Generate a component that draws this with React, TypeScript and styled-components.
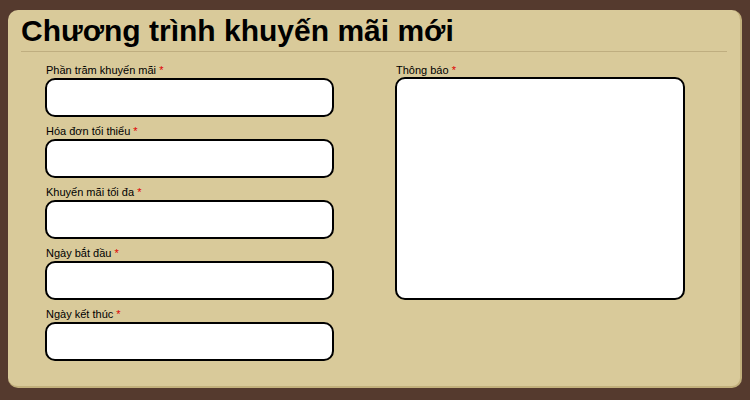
import React from "react";
import styled, { createGlobalStyle } from "styled-components";

const Global = createGlobalStyle`
  html, body { margin: 0; padding: 0; background: #553a2e; }
  body { padding: 10px 8px 12px 8px; font-family: "Liberation Sans", Arial, sans-serif; }
`;

const Panel = styled.div`
  box-sizing: border-box;
  width: 734px;
  height: 378px;
  background: #d9ca9a;
  border-radius: 10px;
  border-right: 2px solid #c2b07c;
  border-bottom: 2px solid #c2b07c;
  padding: 4px 13px 0 13px;
`;

const Title = styled.h1`
  margin: 0;
  font-size: 30px;
  font-weight: bold;
  color: #000;
  line-height: 34px;
  padding-bottom: 3px;
  border-bottom: 1px solid #bfae80;
`;

const Body = styled.div`
  display: flex;
  padding: 12px 0 0 24px;
`;

const Column = styled.div<{ $w: number }>`
  display: flex;
  flex-direction: column;
  width: ${(p) => p.$w}px;
  gap: 8px;
`;

const Field = styled.div`
  display: flex;
  flex-direction: column;
`;

const Label = styled.label`
  font-size: 11px;
  line-height: 13px;
  color: #000;
  padding-left: 1px;
  margin-bottom: 1px;
`;

const Star = styled.span`
  color: #e00000;
`;

const Input = styled.input`
  box-sizing: border-box;
  width: 289px;
  height: 39px;
  border: 2px solid #000;
  border-radius: 10px;
  background: #fff;
  margin: 0;
  outline: none;
`;

const TextArea = styled.textarea`
  box-sizing: border-box;
  width: 290px;
  height: 223px;
  border: 2px solid #000;
  border-radius: 10px;
  background: #fff;
  margin: -1px 0 0 0;
  resize: none;
  outline: none;
`;

const fields = [
  "Phần trăm khuyến mãi",
  "Hóa đơn tối thiểu",
  "Khuyến mãi tối đa",
  "Ngày bắt đầu",
  "Ngày kết thúc",
];

export default function App() {
  return (
    <>
      <Global />
      <Panel>
        <Title>Chương trình khuyến mãi mới</Title>
        <Body>
          <Column $w={350}>
            {fields.map((f) => (
              <Field key={f}>
                <Label>
                  {f} <Star>*</Star>
                </Label>
                <Input />
              </Field>
            ))}
          </Column>
          <Column $w={300}>
            <Field>
              <Label>
                Thông báo <Star>*</Star>
              </Label>
              <TextArea />
            </Field>
          </Column>
        </Body>
      </Panel>
    </>
  );
}
